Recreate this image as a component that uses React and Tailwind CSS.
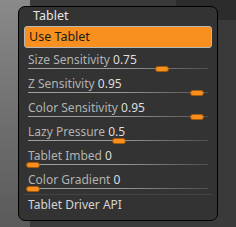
import React from "react";

const F = { fontFamily: '"Noto Sans", "DejaVu Sans", sans-serif' };

function SliderRow({ label, value, pos }) {
  return (
    <div className="h-[24px] relative">
      <div className="pl-[9px] pt-[3px] text-[12px] leading-[16px] whitespace-nowrap">
        <span className="text-[#b2b2b2]">{label}</span>{" "}
        <span className="text-[#dedede]">{value}</span>
      </div>
      <div className="mx-[9px] h-[1px] bg-gradient-to-r from-[#a0a0a0] via-[#9a9a9a] to-[#505050] relative">
        <div
          className="absolute top-[-2px] h-[6px] w-[14px] rounded-[3px] bg-[#f7901e] border border-[#a85a0a]"
          style={{ left: pos }}
        />
      </div>
    </div>
  );
}

export default function App() {
  return (
    <div className="w-[236px] h-[227px] relative overflow-hidden bg-[#3a3a3a]" style={F}>
      <div className="absolute left-0 top-0 w-[30px] h-[227px] bg-gradient-to-b from-[#8a8a8a] via-[#707070] to-[#5a5a5a]" />
      <div className="absolute right-0 top-0 w-[60px] h-[20px] bg-[#2c2c2c]" />
      <div className="relative ml-[18px] pt-[6px] w-[200px]">
        <div className="h-[215px] border border-black rounded-[7px] bg-[#333333] flex flex-col">
          <div className="pl-[14px] pt-[1px] h-[19px] text-[12.5px] leading-[16px] text-[#e6e6e6]">Tablet</div>
          <div className="mx-[5px] h-[22px] rounded-[3px] bg-[#f7901e] border border-[#b8b8b8] pl-[4px] text-[12.5px] leading-[19px] text-[#1c1c1c]">
            Use Tablet
          </div>
          <div className="h-[1px]" />
          <SliderRow label="Size Sensitivity" value="0.75" pos={127} />
          <SliderRow label="Z Sensitivity" value="0.95" pos={162} />
          <SliderRow label="Color Sensitivity" value="0.95" pos={162} />
          <SliderRow label="Lazy Pressure" value="0.5" pos={84} />
          <SliderRow label="Tablet Imbed" value="0" pos={-2} />
          <SliderRow label="Color Gradient" value="0" pos={-2} />
          <div className="mx-[4px] mt-[1px] h-[1px] bg-[#444]" />
          <div className="pl-[9px] pt-[2px] text-[12px] leading-[16px] text-[#d4d4d4]">Tablet Driver API</div>
        </div>
      </div>
    </div>
  );
}
